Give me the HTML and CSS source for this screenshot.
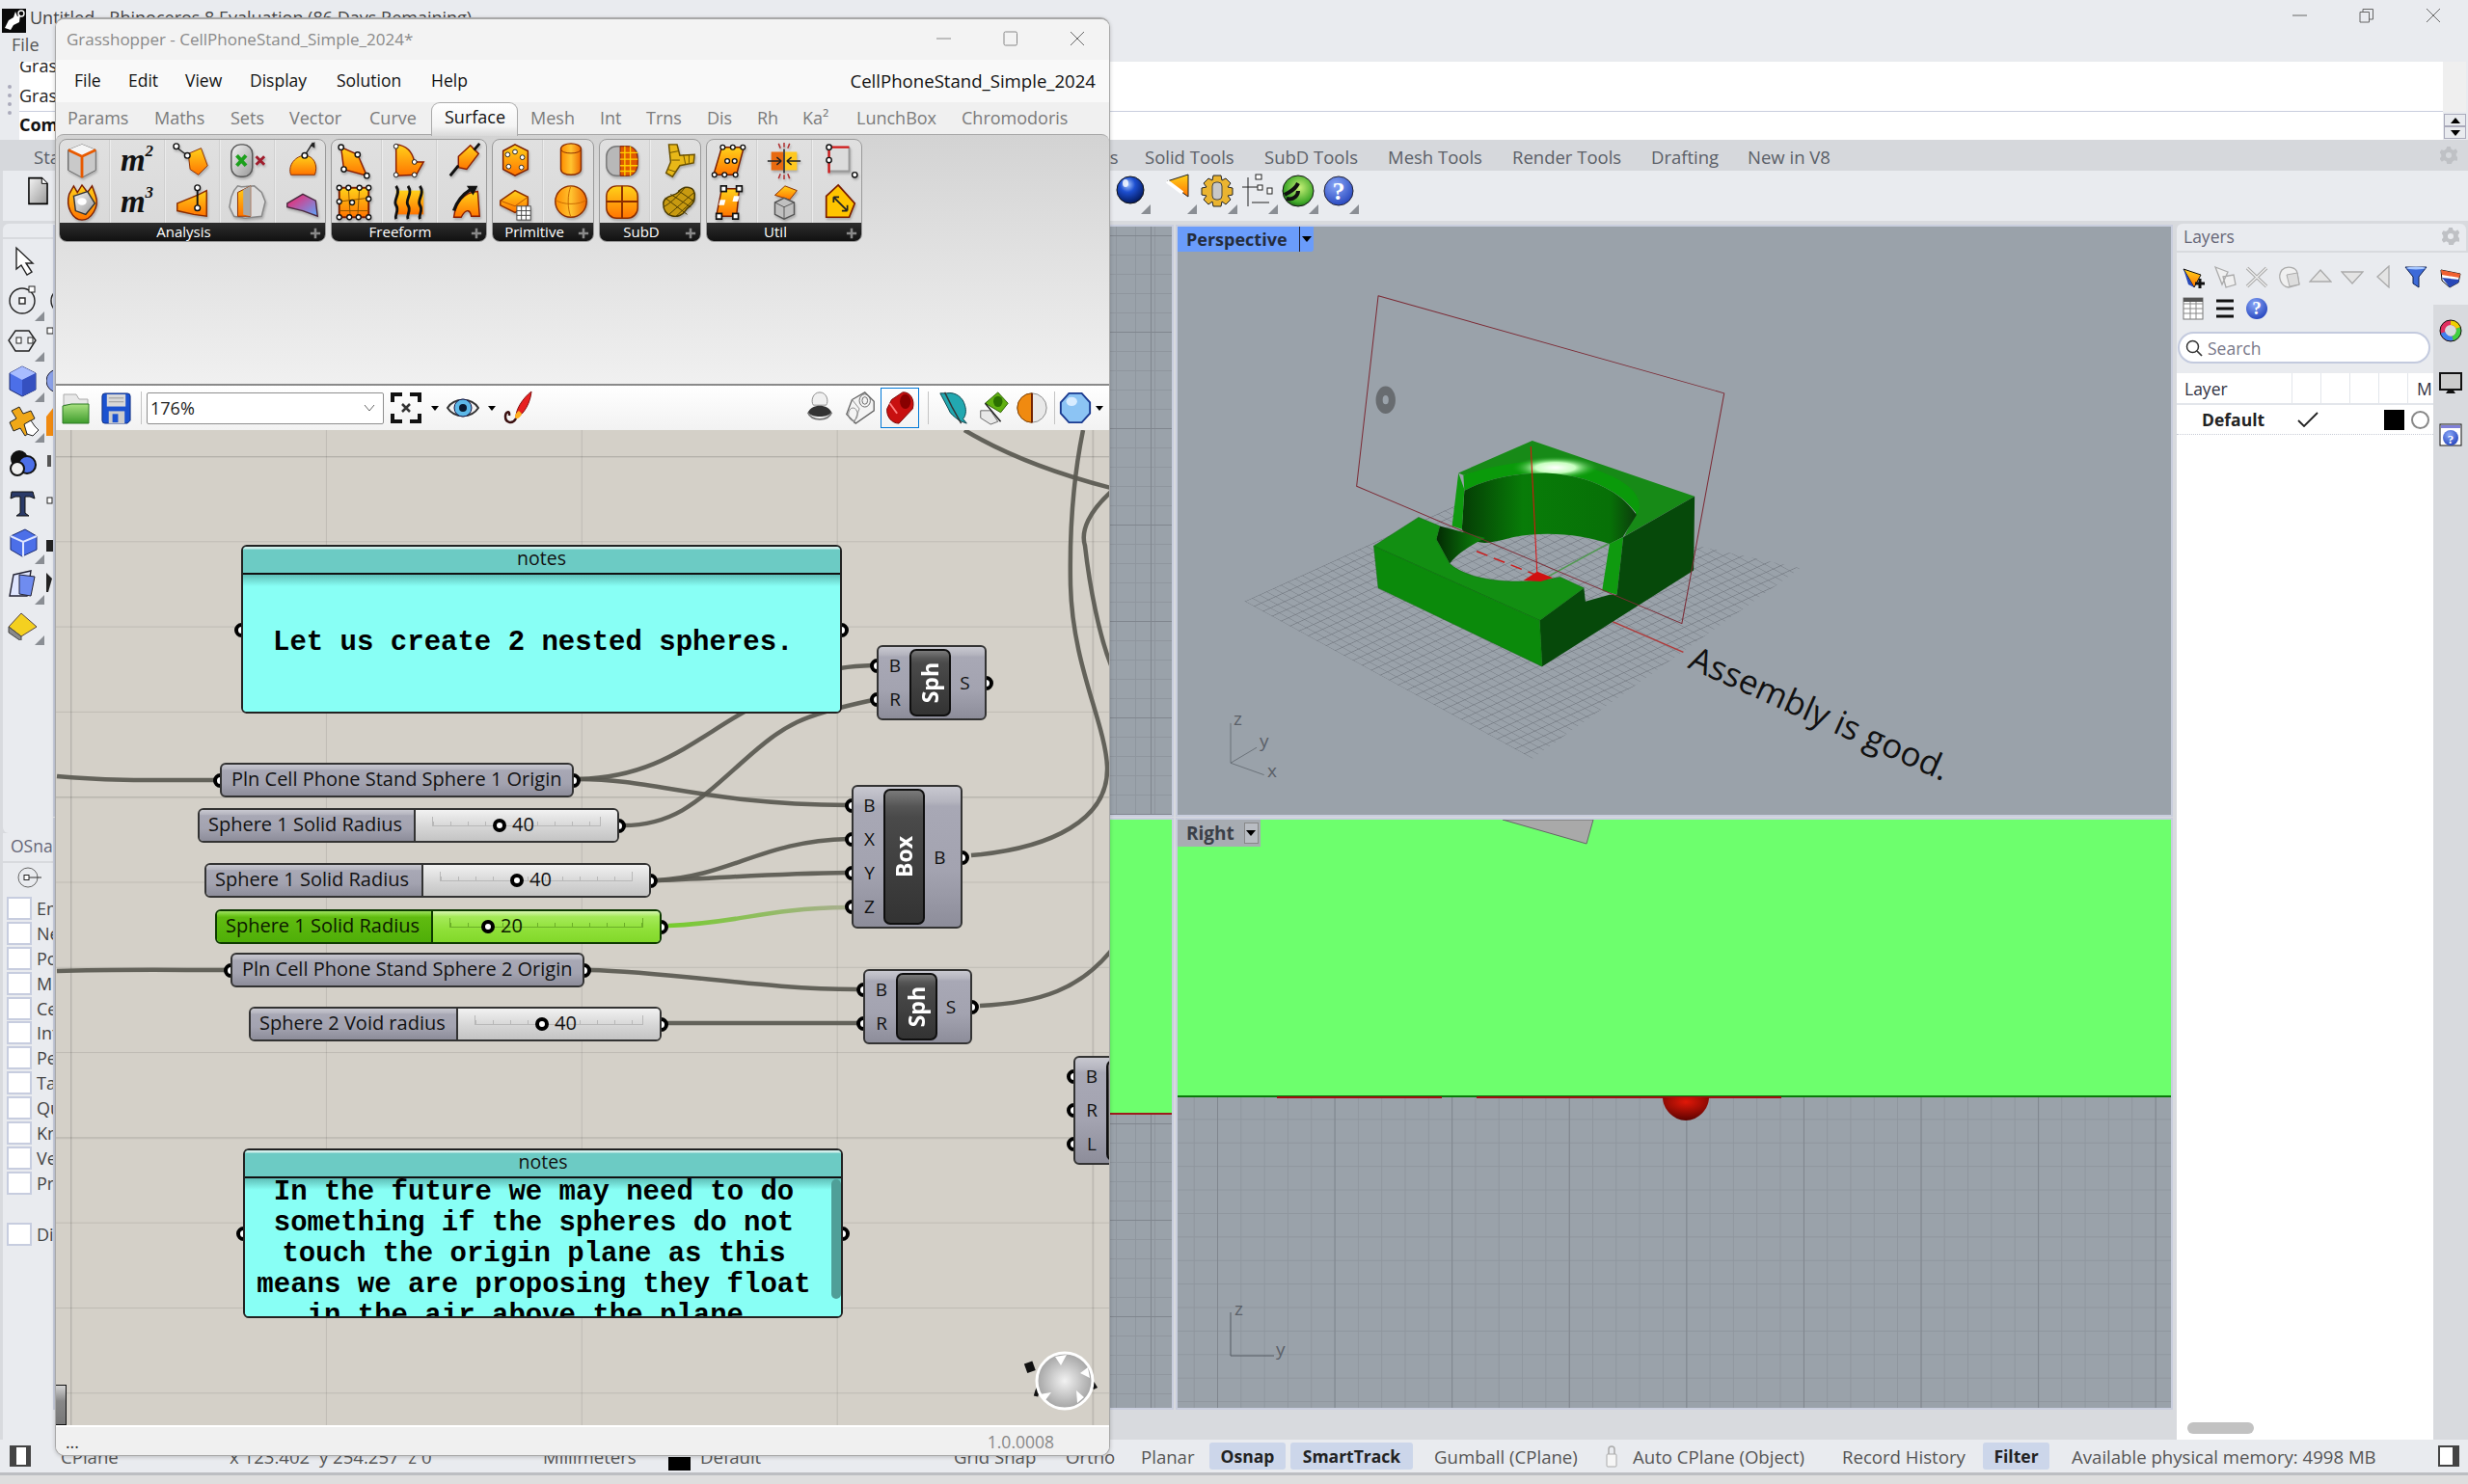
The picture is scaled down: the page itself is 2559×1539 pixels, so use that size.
FILE: index.html
```html
<!DOCTYPE html>
<html lang="en">
<head>
<meta charset="utf-8">
<title>Rhinoceros 8 with Grasshopper</title>
<link rel="stylesheet" href="styles.css">
</head>
<body>
<svg class="defs" aria-hidden="true">
  <defs>
    <linearGradient id="og" x1="0" y1="0" x2="0" y2="1"><stop offset="0" stop-color="#ffd21a"/><stop offset="1" stop-color="#ff7400"/></linearGradient>
    <linearGradient id="oh" x1="0" y1="0" x2="1" y2="0"><stop offset="0" stop-color="#ff8c00"/><stop offset=".5" stop-color="#ffc430"/><stop offset="1" stop-color="#ef6a00"/></linearGradient>
    <linearGradient id="gr" x1="0" y1="0" x2="1" y2="1"><stop offset="0" stop-color="#f4f4f4"/><stop offset="1" stop-color="#999"/></linearGradient>
    <linearGradient id="pk" x1="0" y1="0" x2="1" y2="1"><stop offset="0" stop-color="#ff1a60"/><stop offset="1" stop-color="#5aa8ff"/></linearGradient>
    <radialGradient id="bs" cx=".4" cy=".3" r=".7"><stop offset="0" stop-color="#a8c8ff"/><stop offset=".4" stop-color="#1d4fd0"/><stop offset="1" stop-color="#031a60"/></radialGradient>
    <radialGradient id="hs" cx=".4" cy=".3" r=".8"><stop offset="0" stop-color="#8aa8f8"/><stop offset="1" stop-color="#1c3cb8"/></radialGradient>
    <radialGradient id="gs" cx=".55" cy=".4" r=".7"><stop offset="0" stop-color="#c8f078"/><stop offset=".7" stop-color="#3ea828"/><stop offset="1" stop-color="#0c3a10"/></radialGradient>
    <radialGradient id="nv" cx=".5" cy=".5" r=".55"><stop offset="0" stop-color="#f2f2f2"/><stop offset="1" stop-color="#9c9c9c"/></radialGradient>
    <radialGradient id="rd" cx=".5" cy=".2" r=".8"><stop offset="0" stop-color="#e01808"/><stop offset="1" stop-color="#5c0200"/></radialGradient>
    <radialGradient id="spec" cx=".5" cy=".5" r=".5"><stop offset="0" stop-color="#fff"/><stop offset=".45" stop-color="#c8ffc0"/><stop offset="1" stop-color="#0a9a0a" stop-opacity="0"/></radialGradient>
    <linearGradient id="wall" x1="0" y1="0" x2="1" y2="0"><stop offset="0" stop-color="#053d05"/><stop offset=".35" stop-color="#087c08"/><stop offset=".85" stop-color="#077007"/><stop offset="1" stop-color="#0c3c0c"/></linearGradient>
    <linearGradient id="wall2" x1="0" y1="0" x2="1" y2="0"><stop offset="0" stop-color="#032a03"/><stop offset="1" stop-color="#0c8a0c"/></linearGradient>
    <linearGradient id="gwire" x1="0" y1="0" x2="1" y2="0"><stop offset="0" stop-color="#76cc2e"/><stop offset="1" stop-color="#a9ae90"/></linearGradient>
    <linearGradient id="fold" x1="0" y1="0" x2="0" y2="1"><stop offset="0" stop-color="#a8e080"/><stop offset="1" stop-color="#3e9c2c"/></linearGradient>
    <pattern id="mesh" patternUnits="userSpaceOnUse" width="10" height="10" patternTransform="matrix(1.83 1.11 1.45 -.73 373 1075)">
      <path d="M0 0H10M0 0V10" stroke="#6e747c" stroke-width="1.300" fill="none"/>
    </pattern>
  </defs>
</svg>

<div class="rhino">
  <header class="r-title">
    <svg class="r-logo" viewBox="0 0 25 25"><rect width="25" height="25" fill="#0a0a0a"/><path d="M3 20L7 12 12 9 14 3 16 8 19 6 18 14 12 17 9 22Z" fill="#fff"/><circle cx="20" cy="5" r="3" fill="none" stroke="#fff" stroke-width="1.400"/></svg>
    <span class="r-title-text">Untitled - Rhinoceros 8 Evaluation (86 Days Remaining)</span>
    <div class="win-btns">
      <svg class="wb" viewBox="0 0 16 16"><path d="M0 8H15" stroke="#666" fill="none"/></svg>
      <svg class="wb" viewBox="0 0 16 16"><path d="M1 4.500h9.500v10.500H1zM4 4V1.500h10.500v10.500H11" stroke="#666" fill="none"/></svg>
      <svg class="wb" viewBox="0 0 16 16"><path d="M1 1L15 15M15 1L1 15" stroke="#666" fill="none"/></svg>
    </div>
  </header>
  <div class="r-menu"><span>File</span></div>

  <section class="r-cmd">
    <div class="handle"><i></i><i></i><i></i><i></i></div>
    <div class="cmd-main">
      <div class="cmd-hist"><div>Grasshopper</div><div>Grasshopper</div></div>
      <div class="cmd-prompt">Command:</div>
    </div>
    <div class="cmd-side">
      <div class="cmd-track"></div>
      <div class="cmd-btn"><svg viewBox="0 0 10 6" class="arrow"><path d="M5 0L10 6H0Z"/></svg></div>
      <div class="cmd-btn"><svg viewBox="0 0 10 6" class="arrow"><path d="M0 0H10L5 6Z"/></svg></div>
    </div>
  </section>

  <nav class="r-tabs">
    <span>Standard</span><span>Surface Tools</span><span>Solid Tools</span><span>SubD Tools</span><span>Mesh Tools</span><span>Render Tools</span><span>Drafting</span><span>New in V8</span>
    <svg class="gear r-gear" viewBox="0 0 20 20"><path d="M8 0h4l1 3 2.600 1.100L18 2.600 20.500 6l-2 2.400.3 2.700 2.500 1.800-1.800 3.600-3-.8-2.200 1.700L13 20H8l-.8-3-2.500-1.100L2 17.500-.500 14l2-2.400-.2-2.800L-.500 7 1.600 3.500l3 .9L7 2.800Z" fill="#bfc1c5"/><circle cx="10" cy="10" r="3.400" fill="#d6d8dc"/></svg>
  </nav>

  <div class="r-tools">
    <svg class="doc" viewBox="0 0 22 30"><path d="M1 1H15L21 7V29H1Z" fill="url(#gr)" stroke="#000" stroke-width="1.600"/><path d="M15 1V7H21" fill="#fff" stroke="#000"/></svg>
    <div class="rt-cell rt-first"><svg viewBox="0 0 36 36"><circle cx="18" cy="17" r="14" fill="url(#bs)" stroke="#111"/><ellipse cx="13" cy="10" rx="3" ry="4" fill="#fff" opacity=".8"/></svg><i class="tri"></i></div>
    <div class="rt-cell rt-second"><svg viewBox="0 0 36 36"><path d="M8 8L30 1V24Z" fill="url(#og)" stroke="#222"/><path d="M8 8L24 20" stroke="#fff" stroke-width="4"/></svg><i class="tri"></i></div>
    <div class="rt-cell"><svg viewBox="0 0 36 36"><path d="M14 2h8l1 5 4-2 5 5-3 4 5 1v7l-5 1 3 4-5 5-4-3-1 5h-8l-1-5-4 3-5-5 3-4-5-1v-7l5-1-3-4 5-5 4 2Z" fill="#eab430" stroke="#222"/><rect x="13" y="9" width="10" height="18" rx="4" fill="#c8c8c8" stroke="#444"/></svg><i class="tri"></i></div>
    <div class="rt-cell"><svg viewBox="0 0 36 36"><path d="M2 14H22M8 4V24M8 24V34M12 30H30" stroke="#222" fill="none"/><g fill="#fff" stroke="#222"><rect x="16" y="1" width="6" height="5"/><rect x="18" y="12" width="5" height="5"/><rect x="28" y="15" width="5" height="6"/></g></svg><i class="tri"></i></div>
    <div class="rt-cell"><svg viewBox="0 0 36 36"><circle cx="18" cy="18" r="16" fill="url(#gs)" stroke="#111"/><path d="M4 22C10 18 14 18 18 10M6 26C14 28 18 22 18 18" stroke="#111" stroke-width="4" fill="none"/></svg><i class="tri"></i></div>
    <div class="rt-cell"><svg viewBox="0 0 36 36"><circle cx="18" cy="18" r="15" fill="url(#hs)" stroke="#223"/><text class="qm" x="18" y="27">?</text></svg><i class="tri"></i></div>
  </div>

  <div class="r-main">
    <aside class="left">
      <div class="toolbox">
        <div class="tb-strip"></div>
        <div class="tb-grid">
          <div class="tool"><svg viewBox="0 0 32 34"><path d="M9 5V27L14 23 20 33 25 30 19 21H26Z" fill="#fff" stroke="#222" stroke-width="1.400"/></svg></div>
          <div class="tool"></div>
          <div class="tool"><svg viewBox="0 0 32 34"><circle cx="15" cy="18" r="13" fill="none" stroke="#222" stroke-width="1.400"/><rect x="12" y="15" width="6" height="6" fill="#fff" stroke="#222" stroke-width="1.400"/><rect x="22" y="3" width="6" height="6" fill="#fff" stroke="#222"/></svg><i class="tri"></i></div>
          <div class="tool"><svg viewBox="0 0 32 34"><circle cx="18" cy="18" r="13" fill="none" stroke="#222" stroke-width="1.400"/></svg></div>
          <div class="tool"><svg viewBox="0 0 32 34"><path d="M8 7H22L29 17 22 28H8L1 17Z" fill="none" stroke="#222" stroke-width="1.400"/><rect x="9" y="14" width="5" height="6" fill="#fff" stroke="#222"/><rect x="21" y="14" width="5" height="6" fill="#fff" stroke="#222"/></svg><i class="tri"></i></div>
          <div class="tool"><svg viewBox="0 0 32 34"><rect x="1" y="4" width="6" height="6" fill="#fff" stroke="#222"/></svg></div>
          <div class="tool"><svg viewBox="0 0 32 34"><path d="M15 2L29 9V26L15 33 2 26V9Z" fill="#4c6fe8" stroke="#1a2a70"/><path d="M2 9L15 16 29 9 15 2Z" fill="#a8bcff"/><path d="M15 16V33L29 26V9Z" fill="#3550c0"/></svg><i class="tri"></i></div>
          <div class="tool"><svg viewBox="0 0 32 34"><circle cx="12" cy="17" r="12" fill="#8aa0e8" stroke="#223"/></svg></div>
          <div class="tool"><svg viewBox="0 0 32 34"><path d="M4 6L12 2 16 9 24 6 28 14 21 18 26 26 18 32 13 24 6 27 2 18 9 14Z" fill="#f0a818" stroke="#222"/><path d="M17 20L24 16 28 22 32 26 26 32 20 30Z" fill="#fff" stroke="#222"/></svg><i class="tri"></i></div>
          <div class="tool"><svg viewBox="0 0 32 34"><path d="M0 32V12L8 2V32Z" fill="#f08a10"/></svg></div>
          <div class="tool"><svg viewBox="0 0 32 34"><circle cx="12" cy="14" r="9" fill="#111"/><circle cx="20" cy="20" r="9" fill="#4c6fe8" stroke="#111" stroke-width="2"/><circle cx="10" cy="24" r="7" fill="#eee" stroke="#111" stroke-width="2"/></svg></div>
          <div class="tool"><svg viewBox="0 0 32 34"><rect x="1" y="10" width="4" height="12" fill="#555"/></svg></div>
          <div class="tool"><svg viewBox="0 0 32 34"><path d="M4 6H26L28 13 23 11H18V28L22 31H9L13 28V11H8L3 13Z" fill="#2a3a68" stroke="#111"/></svg></div>
          <div class="tool"><svg viewBox="0 0 32 34"><rect x="1" y="12" width="5" height="6" fill="#fff" stroke="#222"/></svg></div>
          <div class="tool"><svg viewBox="0 0 32 34"><path d="M3 10L18 3 30 10V24L15 31 3 24Z" fill="#4c6fe8" stroke="#1a2a70"/><path d="M3 10L16 16 30 10M16 16V31" stroke="#dfe6ff" stroke-width="2" fill="none"/></svg><i class="tri"></i></div>
          <div class="tool"><svg viewBox="0 0 32 34"><path d="M0 14H8V26H0Z" fill="#222"/></svg></div>
          <div class="tool"><svg viewBox="0 0 32 34"><path d="M6 8L24 4 20 30 2 30Z" fill="#dfe6ff" stroke="#223" stroke-width="1.400"/><path d="M12 8L28 10 24 30 12 28Z" fill="#6f8cf0" stroke="#223"/></svg><i class="tri"></i></div>
          <div class="tool"><svg viewBox="0 0 32 34"><path d="M0 6L6 12 2 26H0Z" fill="#222"/></svg></div>
          <div class="tool"><svg viewBox="0 0 32 34"><path d="M14 6L30 20 14 30 1 20Z" fill="#f4d020" stroke="#544"/><path d="M1 20L14 30V35L1 26Z" fill="#8a8a8a" stroke="#444"/></svg><i class="tri"></i></div>
          <div class="tool"></div>
        </div>
      </div>
      <div class="osnap">
        <div class="os-head">OSnap</div>
        <div class="os-ic"><svg viewBox="0 0 26 24"><circle cx="11" cy="12" r="10" fill="none" stroke="#666"/><rect x="7" y="9.500" width="5" height="5" fill="#fff" stroke="#222"/><path d="M12 12H25" stroke="#333"/></svg></div>
        <ul class="os-list">
          <li>End</li><li>Near</li><li>Point</li><li>Mid</li><li>Cen</li><li>Int</li><li>Perp</li><li>Tan</li><li>Quad</li><li>Knot</li><li>Vertex</li><li>Project</li>
          <li class="os-dis">Disable</li>
        </ul>
      </div>
    </aside>

    <main class="vps">
      <div class="vp vp-gridded">
        <svg class="vp-svg" viewBox="1151 235 64 610" preserveAspectRatio="xMaxYMin slice"><path d="M1151 367H1215M1151 540H1215M1151 765H1215M1151 812H1215" stroke="#8a3a40" stroke-width="1.500"/></svg>
      </div>
      <div class="vp vp-persp">
        <svg class="vp-svg" viewBox="1221 235 1030 610">
          <g transform="translate(1100,130) scale(.5102,.4592)">
            <polygon points="373,1075 838,840 1503,1000 958,1430" fill="url(#mesh)"/>
            <path d="M1120 1120L1265 1190" stroke="#b03a3a" stroke-width="3"/>
            <path d="M985 1022L1112 945" stroke="#4f9a4f" stroke-width="3"/>
            <path d="M845 962L965 1015" stroke="#cc1a1a" stroke-width="3" stroke-dasharray="24 14"/>
            <polygon points="808,785 958,712 1288,838 1145,928 1175,860 1100,795 1000,760 900,770 818,790" fill="#178a17"/>
            <path d="M818 790C900 760 1000 745 1080 775 1150 800 1175 830 1176 860L1172 880C1140 830 1080 790 985 785 920 785 860 800 820 825Z" fill="#0a9a0a"/>
            <ellipse cx="1005" cy="773" rx="90" ry="26" fill="url(#spec)"/>
            <path d="M820 825C860 800 920 785 985 785 1080 790 1140 830 1170 880L1142 930 1115 945C1060 925 990 915 920 930 880 940 840 960 815 912Z" fill="url(#wall)"/>
            <polygon points="808,785 820,822 815,912 795,905" fill="#0f9a0f"/>
            <polygon points="1115,945 1143,930 1130,1060 1100,1050" fill="#0f9a0f"/>
            <path d="M763 935L770 905 862 932C830 950 805 968 790 990Z" fill="url(#wall2)"/>
            <polygon points="1288,838 1286,1005 978,1222 973,1118 1063,1045 1066,1075 1115,1060 1130,1060 1143,930" fill="#06490a"/>
            <path d="M636 950L727 885 770 905 763 935 790 990C830 1030 930 1040 1015 1020L1063 1045 973 1118Z" fill="#128f12" stroke="#0a6a0a"/>
            <polygon points="636,950 973,1118 978,1222 645,1045" fill="#0b8a0b" stroke="#0a6a0a"/>
            <polygon points="940,1028 968,1008 1000,1022 975,1030" fill="#d01010"/>
            <path d="M955 725L968 1015" stroke="#e01010" stroke-width="2"/>
            <polygon points="645,385 1348,605 1262,1125 601,815" fill="none" stroke="#7c2a34" stroke-width="2" stroke-linejoin="round"/>
            <ellipse cx="660" cy="620" rx="20" ry="31" fill="#686c70"/><ellipse cx="660" cy="620" rx="6" ry="10" fill="#9aa2aa"/>
            <path d="M345 1350V1440L398 1405M345 1440L413 1467" stroke="#5a6068" stroke-width="1.500" fill="none"/>
          </g>
          <text class="ax" x="1279" y="752">z</text><text class="ax" x="1306" y="775">y</text><text class="ax" x="1314" y="806">x</text>
          <text class="assembly" transform="translate(1749,692) rotate(24)">Assembly is good.</text>
        </svg>
        <div class="vp-tab vp-tab-blue"><span>Perspective</span><i class="vp-drop"><svg viewBox="0 0 10 6" class="arrow2"><path d="M0 0H10L5 6Z"/></svg></i></div>
      </div>
      <div class="vp">
        <div class="vp-green g-left"></div>
        <div class="vp-gridded vp-rest"></div>
      </div>
      <div class="vp">
        <div class="vp-green g-right"></div>
        <div class="vp-gridded vp-rest vp-rest-right"></div>
        <svg class="vp-svg" viewBox="1221 850 1030 610">
          <polygon points="1558,850 1652,850 1645,875" fill="#a9a9a9" stroke="#666"/>
          <path d="M1221 1137H2251" stroke="#0a7a0a" stroke-width="2"/>
          <path d="M1324 1138H1495M1531 1138H1847" stroke="#a01010" stroke-width="2"/>
          <path d="M1724 1138C1724 1150 1735 1162 1748 1162 1761 1162 1772 1150 1772 1138Z" fill="url(#rd)"/>
          <path d="M1276 1361V1406H1321" stroke="#555b63" fill="none"/>
          <text class="ax" x="1280" y="1364">z</text><text class="ax" x="1323" y="1406">y</text>
        </svg>
        <div class="vp-tab vp-tab-gray"><span>Right</span><i class="vp-drop2"><svg viewBox="0 0 10 6" class="arrow2"><path d="M0 0H10L5 6Z"/></svg></i></div>
      </div>
    </main>

    <aside class="layers">
      <div class="ly-head"><span>Layers</span><svg class="gear" viewBox="0 0 20 20"><path d="M8 0h4l1 3 2.600 1.100L18 2.600 20.500 6l-2 2.400.3 2.700 2.500 1.800-1.800 3.600-3-.8-2.200 1.700L13 20H8l-.8-3-2.500-1.100L2 17.500-.500 14l2-2.400-.2-2.800L-.500 7 1.600 3.500l3 .9L7 2.800Z" fill="#bfc1c5"/><circle cx="10" cy="10" r="3.400" fill="#e9ebef"/></svg></div>
      <div class="ly-body">
        <div class="ly-left">
          <div class="ly-tools">
            <svg viewBox="0 0 24 24"><path d="M2 4L20 10 13 23Z" fill="url(#og)" stroke="#111"/><path d="M2 4L13 23 7 20Z" fill="#2848b8"/><path d="M14 19H24M19 14V24" stroke="#111" stroke-width="3"/></svg>
            <svg viewBox="0 0 24 24"><path d="M2 2L15 7 9 20ZM10 12L21 10 23 20 13 23Z" fill="#f0f0f0" stroke="#aaa" stroke-width="1.300"/></svg>
            <svg viewBox="0 0 24 24"><path d="M2 3L22 22M22 3L2 22" stroke="#aaa" stroke-width="3.500" fill="none"/><path d="M2 3L22 22M22 3L2 22" stroke="#eee" stroke-width="1.400" fill="none"/></svg>
            <svg viewBox="0 0 24 24"><path d="M5 5C10 0 20 2 21 8L23 20 12 23C4 22 0 12 5 5Z" fill="#f0f0f0" stroke="#aaa" stroke-width="1.300"/><path d="M10 10L21 8 23 20 13 22Z" fill="#ddd" stroke="#aaa"/></svg>
            <svg viewBox="0 0 24 24"><path d="M12 5L23 17H1Z" fill="#e4e4e4" stroke="#aaa" stroke-width="1.300"/></svg>
            <svg viewBox="0 0 24 24"><path d="M12 19L23 7H1Z" fill="#e4e4e4" stroke="#aaa" stroke-width="1.300"/></svg>
            <svg viewBox="0 0 24 24"><path d="M5 12L17 1V23Z" fill="#e4e4e4" stroke="#aaa" stroke-width="1.300"/></svg>
            <svg viewBox="0 0 24 24"><path d="M1 2H23L15 12V23L9 19V12Z" fill="#3c6ad8" stroke="#102050"/><ellipse cx="12" cy="3" rx="10" ry="1.500" fill="#a8c8ff"/></svg>
            <svg viewBox="0 0 24 24"><rect x="2" y="1" width="20" height="22" fill="#fff" stroke="#777"/><path d="M2 7H22M2 12H22M2 17H22M9 1V23M15 1V23" stroke="#888"/><rect x="2" y="1" width="20" height="4" fill="#555"/></svg>
            <svg viewBox="0 0 24 24"><path d="M3 4H21M3 12H21M3 20H21" stroke="#111" stroke-width="3.200"/></svg>
            <svg viewBox="0 0 24 24"><circle cx="12" cy="12" r="11" fill="url(#hs)"/><text class="qm qm-s" x="12" y="18">?</text></svg>
          </div>
          <div class="ly-search"><svg viewBox="0 0 18 18"><circle cx="7.500" cy="7.500" r="6" fill="none" stroke="#333" stroke-width="1.500"/><path d="M12 12L17 17" stroke="#333" stroke-width="1.700"/></svg><span>Search</span></div>
          <div class="ly-table">
            <div class="ly-th"><span class="th-name">Layer</span><i></i><i></i><i></i><i></i><span class="th-m">M</span></div>
            <div class="ly-row"><span class="row-name">Default</span><svg class="row-check" viewBox="0 0 22 16"><path d="M1 9L7 15 21 1" fill="none" stroke="#222" stroke-width="1.800"/></svg><i class="row-col"></i><i class="row-mat"></i></div>
            <div class="ly-thumb"></div>
          </div>
        </div>
        <div class="ly-side">
          <svg viewBox="0 0 24 24"><path d="M2 5L22 9 20 18 11 23 3 16Z" fill="#fff" stroke="#111"/><path d="M2 5L22 9 21 13 3 10Z" fill="#f06030"/><path d="M3 13L21 15 20 18 11 23Z" fill="#2848b8"/></svg>
          <svg class="ly-side-first" viewBox="0 0 24 24"><circle cx="12" cy="12" r="8.500" fill="none" stroke="#e03060" stroke-width="5"/><path d="M12 3.500A8.500 8.500 0 0 1 20 9" stroke="#f0d000" stroke-width="5" fill="none"/><path d="M20 9A8.500 8.500 0 0 1 14 20" stroke="#40d040" stroke-width="5" fill="none"/><path d="M14 20A8.500 8.500 0 0 1 4 14" stroke="#4080f0" stroke-width="5" fill="none"/><circle cx="12" cy="12" r="11" fill="none" stroke="#111"/></svg>
          <svg viewBox="0 0 24 24"><rect x="1" y="2" width="22" height="17" fill="#ccc" stroke="#111" stroke-width="2"/><path d="M9 20H15L17 23H7Z" fill="#111"/></svg>
          <svg viewBox="0 0 24 24"><rect x="1" y="1" width="22" height="22" fill="#fff" stroke="#111"/><rect x="2" y="2" width="20" height="3" fill="#8080d8"/><circle cx="12" cy="15" r="8" fill="url(#hs)"/><text class="qm qm-xs" x="12" y="21">?</text></svg>
        </div>
      </div>
    </aside>
  </div>

  <footer class="r-status">
    <svg class="panel-ic" viewBox="0 0 22 22"><rect x="1" y="1" width="20" height="20" fill="#fff" stroke="#444" stroke-width="2"/><rect x="1" y="1" width="6" height="20" fill="#444"/><rect x="17" y="1" width="4" height="20" fill="#444"/></svg>
    <span>CPlane</span><span>x 123.402&nbsp;&nbsp;y 254.257&nbsp;&nbsp;z 0</span><span>Millimeters</span><i class="st-swatch"></i><span>Default</span><span>Grid Snap</span><span>Ortho</span><span>Planar</span>
    <b class="pill p-osnap">Osnap</b><b class="pill p-smart">SmartTrack</b><span>Gumball (CPlane)</span>
    <svg class="lock" viewBox="0 0 14 24"><path d="M4 10V5C4 1 10 1 10 5V10" fill="none" stroke="#aaa" stroke-width="1.500"/><rect x="2" y="10" width="10" height="13" rx="1" fill="#f6f6f6" stroke="#aaa"/></svg>
    <span>Auto CPlane (Object)</span><span>Record History</span><b class="pill p-filter">Filter</b><span>Available physical memory: 4998 MB</span>
    <svg class="panel-ic" viewBox="0 0 22 22"><rect x="1" y="1" width="20" height="20" fill="#fff" stroke="#444" stroke-width="2"/><rect x="15" y="1" width="6" height="20" fill="#444"/></svg>
  </footer>
  <div class="r-bottom"></div>

  <section class="gh">
    <div class="gh-title">
      <span>Grasshopper - CellPhoneStand_Simple_2024*</span>
      <div class="gh-btns">
        <svg class="wb" viewBox="0 0 16 16"><path d="M0 8H15" stroke="#888" fill="none"/></svg>
        <svg class="wb" viewBox="0 0 16 16"><rect x="1" y="1" width="13.500" height="14" rx="1.500" stroke="#888" fill="none"/></svg>
        <svg class="wb" viewBox="0 0 16 16"><path d="M1 1L15 15M15 1L1 15" stroke="#666" fill="none"/></svg>
      </div>
    </div>
    <div class="gh-menu"><span>File</span><span>Edit</span><span>View</span><span>Display</span><span>Solution</span><span>Help</span><span class="gh-doc">CellPhoneStand_Simple_2024</span></div>
    <div class="gh-tabs"><span>Params</span><span>Maths</span><span>Sets</span><span>Vector</span><span>Curve</span><span class="active">Surface</span><span>Mesh</span><span>Int</span><span>Trns</span><span>Dis</span><span>Rh</span><span>Ka²</span><span>LunchBox</span><span>Chromodoris</span></div>

    <div class="ribbon">
      <div class="rg rg5">
        <div class="rg-icons">
          <div class="ic"><svg viewBox="0 0 44 42"><path d="M22 3L37 9V31L22 39 7 31V9Z" fill="#c9c9c9" stroke="#666"/><path d="M22 3L37 9 22 16 7 9Z" fill="#f6f6f6"/><path d="M7 9L22 16 37 9M22 16V39" fill="none" stroke="#e85a00" stroke-width="3"/><path d="M7 9V31" stroke="#666"/></svg></div>
          <div class="ic ic-text"><span class="mm">m<sup>2</sup></span></div>
          <div class="ic"><svg viewBox="0 0 44 42"><path d="M5 6L17 15" stroke="#222" stroke-width="1.500"/><path d="M18 13L32 7 39 26 29 36 20 30Z" fill="url(#og)" stroke="#8a2c00"/><circle cx="5" cy="5" r="3" fill="#fff" stroke="#111" stroke-width="1.500"/><circle cx="17" cy="15" r="3" fill="#fff" stroke="#111" stroke-width="1.500"/></svg></div>
          <div class="ic"><svg viewBox="0 0 44 42"><rect x="5" y="3" width="23" height="35" rx="10" fill="url(#gr)" stroke="#555" stroke-width="1.500"/><path d="M11 15L21 26M21 15L11 26" stroke="#1ca01c" stroke-width="4"/><path d="M32 16L41 25M41 16L32 25" stroke="#a01c2c" stroke-width="3"/></svg></div>
          <div class="ic"><svg viewBox="0 0 44 42"><path d="M9 36C5 25 15 15 24 15 34 15 39 26 35 36Z" fill="url(#og)" stroke="#8a2c00"/><path d="M24 15L33 1" stroke="#222" stroke-width="1.500"/><path d="M30 4L35 0 35 7Z" fill="#222"/><circle cx="24" cy="15" r="3" fill="#fff" stroke="#111" stroke-width="1.500"/></svg></div>
          <div class="ic"><svg viewBox="0 0 44 42"><path d="M8 12L13 3 17 10 22 2 28 10 33 3 37 14C41 26 32 40 22 40 12 40 4 26 8 12Z" fill="url(#og)" stroke="#7a1c00" stroke-width="1.500"/><path d="M13 14L28 9 36 22 26 34 15 30Z" fill="url(#gr)" stroke="#333" stroke-width="1.500"/><ellipse cx="22" cy="20" rx="5" ry="4" fill="#fff"/></svg></div>
          <div class="ic ic-text"><span class="mm">m<sup>3</sup></span></div>
          <div class="ic"><svg viewBox="0 0 44 42"><path d="M6 22L28 13 38 8V36L24 34 6 30Z" fill="url(#og)" stroke="#8a2c00" stroke-width="1.500"/><path d="M28 6V26" stroke="#111" stroke-width="2"/><circle cx="28" cy="5" r="3" fill="#fff" stroke="#111" stroke-width="1.500"/><circle cx="28" cy="27" r="3" fill="#fff" stroke="#111" stroke-width="1.500"/></svg></div>
          <div class="ic"><svg viewBox="0 0 44 42"><path d="M5 15L8 8 12 3 16 4 30 3 38 10 42 20 38 36 20 38 8 36 3 26Z" fill="#ddd" stroke="#888" stroke-width="1.500"/><path d="M12 10L26 3V36L12 36Z" fill="url(#og)" stroke="#8a2c00"/><path d="M18 7L26 3V36L18 34Z" fill="#a8a8a8"/></svg></div>
          <div class="ic"><svg viewBox="0 0 44 42"><path d="M5 22L22 12 36 19 38 36 22 30 5 26Z" fill="url(#pk)" stroke="#4a2a40" stroke-width="1.500"/></svg></div>
        </div>
        <div class="rg-bar"><span>Analysis</span><svg class="plus" viewBox="0 0 14 14"><path d="M7 1V13M1 7H13" stroke="#888" stroke-width="3"/></svg></div>
      </div>
      <div class="rg rg3">
        <div class="rg-icons">
          <div class="ic"><svg viewBox="0 0 44 42"><path d="M8 6L26 14 36 37 11 30Z" fill="url(#og)" stroke="#8a1c00" stroke-width="1.500"/><g fill="#fff" stroke="#111" stroke-width="1.500"><circle cx="8" cy="6" r="2.800"/><circle cx="26" cy="14" r="2.800"/><circle cx="36" cy="37" r="2.800"/><circle cx="11" cy="30" r="2.800"/></g></svg></div>
          <div class="ic"><svg viewBox="0 0 44 42"><path d="M8 3C20 4 26 12 28 22L38 22 30 36 8 37Z" fill="url(#og)" stroke="#8a1c00" stroke-width="1.500"/><g fill="#fff" stroke="#111"><circle cx="8" cy="5" r="2.500"/><circle cx="28" cy="22" r="2.500"/><circle cx="28" cy="36" r="2.500"/><circle cx="8" cy="36" r="2.500"/></g></svg></div>
          <div class="ic"><svg viewBox="0 0 44 42"><path d="M15 16L28 4 37 13 24 30 15 28Z" fill="url(#og)" stroke="#8a1c00" stroke-width="1.500"/><path d="M6 37L15 26M32 9L38 2" stroke="#111" stroke-width="3"/></svg></div>
          <div class="ic"><svg viewBox="0 0 44 42"><rect x="6" y="5" width="32" height="32" fill="url(#og)" stroke="#7a1c00" stroke-width="2"/><path d="M6 20L38 16M6 30H38M16 5L18 37M28 5L26 37" stroke="#8a5000"/><g fill="#fff" stroke="#111" stroke-width="1.400"><circle cx="6" cy="5" r="2.600"/><circle cx="16" cy="5" r="2.600"/><circle cx="28" cy="5" r="2.600"/><circle cx="38" cy="5" r="2.600"/><circle cx="6" cy="20" r="2.600"/><circle cx="38" cy="17" r="2.600"/><circle cx="6" cy="37" r="2.600"/><circle cx="17" cy="37" r="2.600"/><circle cx="27" cy="37" r="2.600"/><circle cx="38" cy="37" r="2.600"/><circle cx="20" cy="21" r="2.600"/></g></svg></div>
          <div class="ic"><svg viewBox="0 0 44 42"><path d="M8 8H38V34H8Z" fill="url(#og)"/><path d="M8 3C14 12 4 18 8 24 12 30 6 34 8 39M21 3C27 12 17 18 21 24 25 30 19 34 21 39M34 3C40 12 30 18 34 24 38 30 32 34 34 39" fill="none" stroke="#111" stroke-width="3"/></svg></div>
          <div class="ic"><svg viewBox="0 0 44 42"><path d="M10 37C12 22 20 10 36 9L38 36H29C28 30 24 26 18 37Z" fill="url(#og)" stroke="#8a1c00" stroke-width="1.500"/><path d="M10 30C14 18 20 12 28 7" stroke="#111" stroke-width="3.500" fill="none"/><path d="M24 3L36 3 31 13Z" fill="#111"/></svg></div>
        </div>
        <div class="rg-bar"><span>Freeform</span><svg class="plus" viewBox="0 0 14 14"><path d="M7 1V13M1 7H13" stroke="#888" stroke-width="3"/></svg></div>
      </div>
      <div class="rg rg2">
        <div class="rg-icons">
          <div class="ic"><svg viewBox="0 0 44 42"><path d="M22 3L36 10V30L22 37 9 30V10Z" fill="url(#og)" stroke="#7a1c00" stroke-width="1.500"/><g fill="#fff" stroke="#222"><circle cx="22" cy="11" r="2.500"/><circle cx="14" cy="14" r="2.500"/><circle cx="30" cy="17" r="2.500"/><circle cx="15" cy="27" r="2.500"/><circle cx="29" cy="28" r="2.500"/></g></svg></div>
          <div class="ic"><svg viewBox="0 0 44 42"><path d="M11 8C11 0 33 0 33 8V30C33 38 11 38 11 30Z" fill="url(#oh)" stroke="#8a2c00" stroke-width="1.500"/><path d="M11 8C11 14 33 14 33 8" fill="none" stroke="#8a2c00"/></svg></div>
          <div class="ic"><svg viewBox="0 0 44 42"><path d="M6 19L22 8 36 15V24L22 32 6 24Z" fill="url(#og)" stroke="#8a2c00" stroke-width="1.500"/><path d="M6 19L22 25 36 15" fill="none" stroke="#b85000"/><rect x="24" y="25" width="15" height="15" fill="#fff" stroke="#444"/><path d="M24 30H39M24 35H39M29 25V40M34 25V40" stroke="#444"/></svg></div>
          <div class="ic"><svg viewBox="0 0 44 42"><circle cx="22" cy="20" r="17" fill="url(#oh)" stroke="#8a2c00" stroke-width="1.500"/><path d="M5 18C12 24 32 24 39 18M22 3C18 12 18 28 22 37" fill="none" stroke="#c86800"/></svg></div>
        </div>
        <div class="rg-bar"><span>Primitive</span><svg class="plus" viewBox="0 0 14 14"><path d="M7 1V13M1 7H13" stroke="#888" stroke-width="3"/></svg></div>
      </div>
      <div class="rg rg2">
        <div class="rg-icons">
          <div class="ic"><svg viewBox="0 0 44 42"><rect x="5" y="5" width="34" height="32" rx="11" fill="#b8b8b8" stroke="#777" stroke-width="1.500"/><path d="M20 5H28C36 5 39 12 39 21 39 30 36 37 28 37H20Z" fill="#e05a00" stroke="#8a1c00"/><path d="M20 12H39M20 19H39M20 26H39M20 32H36M25 5V37M31 5V37" stroke="#ffd000" stroke-width="1.400"/></svg></div>
          <div class="ic"><svg viewBox="0 0 44 42"><path d="M12 3H21L24 15 40 14 39 23 24 26 16 38 9 34 14 22Z" fill="#e8b818" stroke="#6a5000" stroke-width="1.500"/><path d="M13 12L23 10M15 20H24M28 14L30 24M34 14V23M11 30L20 33" stroke="#6a5000"/></svg></div>
          <div class="ic"><svg viewBox="0 0 44 42"><rect x="5" y="3" width="34" height="35" rx="11" fill="url(#og)" stroke="#8a2c00" stroke-width="1.500"/><path d="M22 3V38M5 20H39" stroke="#8a2c00" stroke-width="2"/></svg></div>
          <div class="ic"><svg viewBox="0 0 44 42"><path d="M6 22C6 14 18 14 22 10 28 2 42 2 40 16 40 24 34 24 30 30 24 40 6 38 6 22Z" fill="#c89a10" stroke="#4a3a00" stroke-width="1.500"/><path d="M8 16L32 34M14 12L36 26M22 8L40 20M6 26C14 22 26 10 30 4M12 34C22 26 34 14 40 10M20 36C26 30 36 22 40 16" stroke="#4a3a00" fill="none"/></svg></div>
        </div>
        <div class="rg-bar"><span>SubD</span><svg class="plus" viewBox="0 0 14 14"><path d="M7 1V13M1 7H13" stroke="#888" stroke-width="3"/></svg></div>
      </div>
      <div class="rg rg3">
        <div class="rg-icons">
          <div class="ic"><svg viewBox="0 0 44 42"><path d="M14 6H38L30 36H5Z" fill="url(#og)" stroke="#7a1c00" stroke-width="1.500"/><g fill="#fff" stroke="#111" stroke-width="1.400"><circle cx="15" cy="6" r="2.500"/><circle cx="26" cy="6" r="2.500"/><circle cx="37" cy="6" r="2.500"/><circle cx="20" cy="21" r="2.500"/><circle cx="28" cy="21" r="2.500"/><circle cx="6" cy="36" r="2.500"/><circle cx="17" cy="36" r="2.500"/><circle cx="29" cy="36" r="2.500"/></g></svg></div>
          <div class="ic"><svg viewBox="0 0 44 42"><rect x="8" y="11" width="13" height="20" fill="#e86a10"/><rect x="23" y="11" width="13" height="20" fill="#ffc820"/><path d="M4 21H19M19 21L14 17M19 21L14 25M40 21H25M25 21L30 17M25 21L30 25M22 8V34" stroke="#222" stroke-width="1.600" fill="none"/><path d="M16 2L18 7M22 1V6M28 2L26 7M16 40L18 35M22 41V36M28 40L26 35" stroke="#b03030" stroke-width="1.600"/></svg></div>
          <div class="ic"><svg viewBox="0 0 44 42"><path d="M10 6V32H32V6" fill="#dcdcdc" stroke="#999" stroke-width="2"/><path d="M10 34V6H32" fill="none" stroke="#d01818" stroke-width="2.400"/><g fill="#fff" stroke="#111" stroke-width="1.500"><circle cx="10" cy="6" r="2.800"/><circle cx="10" cy="20" r="2.800"/><circle cx="38" cy="36" r="2.800"/></g></svg></div>
          <div class="ic"><svg viewBox="0 0 44 42"><path d="M14 6H33L30 36H8Z" fill="url(#og)" stroke="#7a1c00" stroke-width="1.500"/><g fill="#fff" stroke="#111" stroke-width="1.800"><rect x="13" y="3" width="6" height="6"/><rect x="30" y="3" width="6" height="6"/><rect x="8" y="33" width="6" height="6"/><rect x="26" y="33" width="6" height="6"/></g><g fill="#fff"><rect x="17" y="18" width="6" height="6" transform="skewX(-15)"/><rect x="31" y="14" width="6" height="6" transform="skewX(-15)"/></g></svg></div>
          <div class="ic"><svg viewBox="0 0 44 42"><path d="M12 13L23 3 36 8 28 18Z" fill="url(#og)" stroke="#8a2c00"/><path d="M12 21L22 16 33 21V34L22 39 12 34Z" fill="#c0c0c0" stroke="#555" stroke-width="1.500"/><path d="M12 21L22 26 33 21M22 26V39" fill="none" stroke="#555"/></svg></div>
          <div class="ic"><svg viewBox="0 0 44 42"><path d="M20 2L38 22 32 37H7V14Z" fill="#ffc400" stroke="#7a1c00" stroke-width="1.800"/><path d="M15 15L30 30M15 15V21M15 15H21M30 30V24M30 30H24" fill="none" stroke="#222" stroke-width="1.800"/></svg></div>
        </div>
        <div class="rg-bar"><span>Util</span><svg class="plus" viewBox="0 0 14 14"><path d="M7 1V13M1 7H13" stroke="#888" stroke-width="3"/></svg></div>
      </div>
    </div>

    <div class="gh-tools">
      <svg class="t29" viewBox="0 0 29 34"><path d="M2 33V3H15L18 8H27V14H2" fill="#e8e8e8" stroke="#aaa"/><path d="M1 33V15L10 13H28V33Z" fill="url(#fold)" stroke="#2c7a24"/></svg>
      <svg class="t33" viewBox="0 0 34 34"><path d="M2 4Q2 1 5 1H29Q32 1 32 4V30L29 33H5Q2 33 2 30Z" fill="#1b52d0" stroke="#0a2a80"/><rect x="7" y="2" width="20" height="13" fill="#d8d8d8"/><path d="M9 6H25M9 10H25" stroke="#999"/><rect x="9" y="20" width="17" height="13" fill="#ccc"/><rect x="13" y="23" width="6" height="9" fill="#1b52d0"/></svg>
      <i class="t-sep"></i>
      <div class="zoom-box"><span>176%</span><svg viewBox="0 0 12 8"><path d="M1 1L6 7 11 1" fill="none" stroke="#666"/></svg></div>
      <svg class="t34" viewBox="0 0 34 34"><path d="M3 11V3H13M21 3H31V11M31 23V31H21M13 31H3V23" fill="none" stroke="#111" stroke-width="4"/><path d="M13 13L21 21M21 13L13 21" stroke="#333" stroke-width="2.500"/></svg>
      <svg class="t-drop" viewBox="0 0 8 5"><path d="M0 0H8L4 5Z"/></svg>
      <svg class="t34 t-eye" viewBox="0 0 34 34"><path d="M1 17C8 6 26 6 33 17 26 28 8 28 1 17Z" fill="#f2f2f2" stroke="#333" stroke-width="2"/><circle cx="17" cy="17" r="9" fill="#5cb8e8" stroke="#114"/><circle cx="17" cy="17" r="4" fill="#0a1a30"/></svg>
      <svg class="t-drop" viewBox="0 0 8 5"><path d="M0 0H8L4 5Z"/></svg>
      <svg class="t32" viewBox="0 0 32 36"><path d="M29 1C28 12 22 24 13 29 12 20 20 8 29 1Z" fill="#e82020" stroke="#801010"/><path d="M13 29C10 27 14 22 16 21L19 24C18 27 15 30 13 29Z" fill="#ffb020"/><path d="M13 29C9 36 2 33 2 27 2 22 7 20 6 26" fill="none" stroke="#3a1010" stroke-width="2.500"/></svg>
      <div class="t-right">
        <svg class="t34" viewBox="0 0 34 38"><path d="M17 2C25 2 27 12 24 16L10 16C7 12 9 2 17 2Z" fill="#f0f0f0" stroke="#888"/><path d="M4 24C8 14 26 14 30 24 26 30 8 30 4 24Z" fill="#333"/><path d="M4 24C8 34 26 34 30 24" fill="none" stroke="#777" stroke-width="2"/></svg>
        <svg class="t34 m8" viewBox="0 0 34 38"><path d="M8 10L22 2 32 12 32 22 12 36 2 26Z" fill="#f4f4f4" stroke="#666" stroke-width="1.400"/><ellipse cx="22" cy="11" rx="6" ry="7" fill="none" stroke="#666"/><ellipse cx="22" cy="11" rx="3" ry="4" fill="none" stroke="#666"/><ellipse cx="9" cy="26" rx="5" ry="7" fill="none" stroke="#888"/><path d="M8 10L16 20 10 36" fill="none" stroke="#888"/></svg>
        <div class="t-sel m4"><svg class="t34" viewBox="0 0 34 38"><path d="M8 10L20 2C28 1 34 10 31 20L16 36C8 36 2 28 3 20Z" fill="#c81010" stroke="#700"/><ellipse cx="23" cy="12" rx="6" ry="8" fill="#800"/><path d="M6 14L14 25" stroke="#ff8080" stroke-width="2"/></svg></div>
        <i class="t-vline m9"></i>
        <svg class="t34 m10" viewBox="0 0 34 38"><path d="M1 3L8 3C18 1 26 8 28 16 30 22 29 28 26 31L30 36 22 33C16 28 12 26 10 20Z" fill="#22a8b0" stroke="#0a4048"/><path d="M6 2L14 18 24 36" stroke="#333" stroke-width="1.500" fill="none"/></svg>
        <svg class="t34 m6" viewBox="0 0 34 38"><path d="M8 14L22 2 33 14 25 24Z" fill="#60b010" stroke="#2a6000"/><ellipse cx="22" cy="12" rx="5" ry="6" fill="#2a7000"/><path d="M3 22L14 22 22 34 14 37 3 30Z" fill="#e8e8e8" stroke="#666"/><path d="M8 14L25 34" stroke="#222" stroke-width="1.600"/></svg>
        <svg class="t34 m6" viewBox="0 0 34 38"><circle cx="17" cy="19" r="16" fill="#e8e8e8" stroke="#888"/><path d="M17 3A16 16 0 0 0 17 35Z" fill="#f08a10" stroke="#804000"/><path d="M17 3V35" stroke="#702000" stroke-width="2"/></svg>
        <i class="t-vline m6"></i>
        <svg class="t34 m4" viewBox="0 0 34 38"><path d="M10 3H24L33 13V25L24 35H10L1 25V13Z" fill="#8cc4f4" stroke="#1a3a90" stroke-width="2"/><ellipse cx="13" cy="12" rx="6" ry="5" fill="#d8ecff"/></svg>
        <svg class="t-drop t-drop-r" viewBox="0 0 8 5"><path d="M0 0H8L4 5Z"/></svg>
      </div>
    </div>

    <div class="canvas">
      <svg class="wires" viewBox="58 446 1092 1032">
        <g class="w">
          <path d="M59 805C110 810 170 809 222 809"/>
          <path d="M59 1007C120 1005 180 1006 234 1006"/>
          <path d="M600 808C680 806 716 770 772 738S840 692 905 690"/>
          <path d="M600 808C680 808 730 834 880 835"/>
          <path d="M646 856C700 856 725 830 770 790S830 742 905 726"/>
          <path d="M682 913C760 908 790 872 880 870"/>
          <path d="M682 913C760 910 800 906 880 905"/>
          <path d="M611 1006C700 1008 790 1026 888 1026"/>
          <path d="M690 1061H890"/>
          <path d="M1007 887C1090 880 1150 850 1148 795 1146 750 1112 690 1110 607 1109 560 1112 500 1123 446"/>
          <path d="M1152 510C1130 530 1120 550 1125 566 1130 610 1140 660 1152 690"/>
          <path d="M1000 446C1040 470 1090 490 1152 506"/>
          <path d="M1016 1043C1080 1040 1120 1025 1152 986"/>
        </g>
        <path class="gw" d="M693 960C770 957 790 942 880 941" stroke="url(#gwire)"/>
        <g>
          <path d="M1074 1448A33 33 0 0 1 1136 1440" fill="none" stroke="#111" stroke-width="4.500"/>
          <rect x="1063" y="1413" width="9" height="10" fill="#111" transform="rotate(-20 1067 1417)"/>
          <circle cx="1104" cy="1432" r="29" fill="url(#nv)" stroke="#fff" stroke-width="3"/>
          <path d="M1094 1407L1100 1416 1106 1405ZM1128 1418L1120 1424 1130 1429ZM1124 1449L1116 1442 1117 1455ZM1084 1452L1090 1444 1078 1446Z" fill="#fff"/>
        </g>
      </svg>
      <i class="scroll-stub"></i>

      <div class="note note1">
        <i class="grip gi"></i><i class="grip go"></i>
        <div class="note-head">notes</div>
        <div class="note-body"><p>Let us create 2 nested spheres.</p></div>
      </div>

      <div class="node param p1"><i class="grip gi"></i><span>Pln Cell Phone Stand Sphere 1 Origin</span><i class="grip go"></i></div>
      <div class="node slider s1"><div class="sl-name">Sphere 1 Solid Radius</div><div class="sl-val"><div class="track"></div><i class="knob k1"></i><span class="val v1">40</span></div><i class="grip go"></i></div>
      <div class="node slider s2"><div class="sl-name">Sphere 1 Solid Radius</div><div class="sl-val"><div class="track"></div><i class="knob k2"></i><span class="val v2">40</span></div><i class="grip go"></i></div>
      <div class="node slider green s3"><div class="sl-name">Sphere 1 Solid Radius</div><div class="sl-val"><div class="track"></div><i class="knob k3"></i><span class="val v3">20</span></div><i class="grip go"></i></div>
      <div class="node param p2"><i class="grip gi"></i><span>Pln Cell Phone Stand Sphere 2 Origin</span><i class="grip go"></i></div>
      <div class="node slider s4"><div class="sl-name">Sphere 2 Void radius</div><div class="sl-val"><div class="track"></div><i class="knob k4"></i><span class="val v4">40</span></div><i class="grip go"></i></div>

      <div class="node comp sph1">
        <div class="c-in"><span>B<i class="grip gi"></i></span><span>R<i class="grip gi"></i></span></div>
        <div class="c-bar"><b>Sph</b></div>
        <div class="c-out"><span>S<i class="grip go"></i></span></div>
      </div>
      <div class="node comp box">
        <div class="c-in"><span>B<i class="grip gi"></i></span><span>X<i class="grip gi"></i></span><span>Y<i class="grip gi"></i></span><span>Z<i class="grip gi"></i></span></div>
        <div class="c-bar"><b>Box</b></div>
        <div class="c-out"><span>B<i class="grip go"></i></span></div>
      </div>
      <div class="node comp sph2">
        <div class="c-in"><span>B<i class="grip gi"></i></span><span>R<i class="grip gi"></i></span></div>
        <div class="c-bar"><b>Sph</b></div>
        <div class="c-out"><span>S<i class="grip go"></i></span></div>
      </div>
      <div class="node comp part">
        <div class="c-in"><span>B<i class="grip gi"></i></span><span>R<i class="grip gi"></i></span><span>L<i class="grip gi"></i></span></div>
        <div class="c-bar"></div>
      </div>

      <div class="note note2">
        <i class="grip gi"></i><i class="grip go"></i>
        <div class="note-head">notes</div>
        <div class="note-body"><p>In the future we may need to do<br>something if the spheres do not<br>touch the origin plane as this<br>means we are proposing they float<br>in the air above the plane.</p><i class="note-scroll"></i></div>
      </div>
    </div>

    <div class="gh-status"><span class="dots">...</span><span class="ver">1.0.0008</span></div>
  </section>
</div>
</body>
</html>
```

FILE: styles.css
```css
* { box-sizing: border-box; }
html, body { margin: 0; padding: 0; }
body { width: 2559px; height: 1539px; overflow: hidden; font-family: "Open Sans", "Noto Sans", sans-serif; font-size: 17.500px; color: #333; background: #dedede; }
.defs { position: absolute; width: 0; height: 0; }
svg { display: block; }

.rhino { position: relative; width: 2559px; height: 1539px; display: flex; flex-direction: column; background: #d8dade; overflow: hidden; }

/* Rhino title + menu */
.r-title { height: 32px; background: #e9ebef; display: flex; align-items: center; padding-left: 2px; flex: none; position: relative; }
.r-logo { width: 25px; height: 25px; margin-top: 10px; flex: none; }
.r-title-text { margin-left: 4px; font-size: 18px; color: #444; margin-top: 4px; white-space: nowrap; }
.win-btns { margin-left: auto; display: flex; align-items: center; padding-right: 28px; gap: 53px; }
.wb { width: 16px; height: 16px; }
.r-menu { height: 32px; background: #e9ebef; padding-left: 12px; line-height: 28px; font-size: 18px; color: #555; flex: none; }

/* Command area */
.r-cmd { height: 81px; flex: none; display: flex; background: #e9ebef; }
.handle { width: 20px; display: flex; flex-direction: column; align-items: center; gap: 5px; padding-top: 24px; }
.handle i { width: 4px; height: 4px; border-radius: 50%; background: #aab; display: block; }
.cmd-main { flex: 1; background: #fff; display: flex; flex-direction: column; }
.cmd-hist { height: 52px; overflow: hidden; display: flex; flex-direction: column; justify-content: flex-end; border-bottom: 1px solid #c9cede; line-height: 31px; font-size: 18px; color: #222; }
.cmd-prompt { flex: 1; font-weight: 700; font-size: 18px; color: #111; line-height: 26px; }
.cmd-side { width: 26px; background: #e9ebef; flex: none; }
.cmd-track { height: 52px; background: #efefef; width: 24px; }
.cmd-btn { width: 23px; height: 13px; border: 1px solid #aab; background: #e9ebef; margin: 0 0 0 1px; display: flex; align-items: center; justify-content: center; }
.cmd-btn:nth-child(2) { margin-top: 2px; }
.arrow { width: 10px; height: 6px; }

/* Rhino tabs */
.r-tabs { height: 32px; flex: none; background: #d6d8dc; display: grid; grid-template-columns: 1070px 82px 124px 128px 129px 144px 100px 720px 20px; align-items: center; color: #5b6068; font-size: 18.500px; position: relative; padding: 2px 0 0 35px; }
.r-tabs span { white-space: nowrap; }
.r-tabs span:nth-child(2) { transform: translateX(-61px); }
.gear { width: 18px; height: 18px; }
.r-gear { position: absolute; left: 2530px; top: 7px; }

.r-tools { height: 52px; flex: none; background: #e9ebef; display: flex; align-items: flex-start; padding: 3px 0 0 29px; margin-left: 3px; }
.doc { width: 21px; height: 30px; margin-top: 3px; margin-left: -3px; }
.rt-cell { width: 42px; height: 36px; position: relative; display: flex; justify-content: center; }
.rt-cell svg { width: 36px; height: 36px; }
.rt-first { margin-left: 1101px; }
.rt-second { margin-left: 6px; }
.tri { position: absolute; right: 0; bottom: -6px; width: 10px; height: 10px; background: #8a8e94; clip-path: polygon(100% 0, 100% 100%, 0 100%); }
.qm { font: 700 26px "Liberation Serif", serif; fill: #fff; text-anchor: middle; }
.qm-s { font-size: 19px; }
.qm-xs { font-size: 13px; }

/* Main region */
.r-main { flex: 1; min-height: 0; display: flex; }
.left { width: 57px; flex: none; display: flex; flex-direction: column; padding-top: 3px; }
.toolbox { margin-left: 3px; height: 632px; background: #e9ebef; border-radius: 6px 0 0 6px; }
.tb-strip { height: 16px; border-bottom: 2px solid #d8dade; }
.tb-grid { display: grid; grid-template-columns: 40px 40px; grid-auto-rows: 42px; padding: 4px 0 0 5px; width: 54px; overflow: hidden; }
.tool { width: 32px; height: 34px; position: relative; }
.tool svg { width: 32px; height: 34px; }
.tool .tri { right: -6px; bottom: -5px; }

.osnap { margin-left: 3px; flex: 1; background: #e9ebef; }
.os-head { height: 31px; padding-left: 8px; line-height: 27px; color: #667; font-size: 17.500px; border-bottom: 2px solid #d8dade; white-space: nowrap; overflow: hidden; }
.os-ic { padding: 3px 0 0 15px; height: 34px; }
.os-ic svg { width: 26px; height: 24px; }
.os-list { list-style: none; margin: 0; padding: 0 0 0 4px; overflow: hidden; }
.os-list li { height: 25.900px; display: flex; align-items: center; gap: 5px; white-space: nowrap; font-size: 18px; color: #444; }
.os-list li::before { content: ""; width: 22px; height: 20px; background: #fff; border: 2px solid #c7cddf; flex: none; }
.os-list .os-dis { margin-top: 27px; }

/* Viewports */
.vps { flex: none; width: 2200px; display: grid; grid-template-columns: 1158px 1030px; grid-template-rows: 610px 610px; column-gap: 6px; row-gap: 5px; padding-top: 6px; background: #d8dade; align-content: start; }
.vp { position: relative; background: #9aa2aa; overflow: hidden; box-shadow: 0 0 0 2px #c9cede; display: flex; flex-direction: column; }
.vp-svg { position: absolute; left: 0; top: 0; width: 100%; height: 100%; }
.vp-gridded {
  background-color: #9aa2aa;
  background-image:
    linear-gradient(#80868e 1px, transparent 1px), linear-gradient(90deg, #80868e 1px, transparent 1px),
    linear-gradient(#8f969e 1px, transparent 1px), linear-gradient(90deg, #8f969e 1px, transparent 1px);
  background-size: 100px 100px, 100px 100px, 20px 20px, 20px 20px;
  background-position: 0 9px, 36px 0, 0 9px, 0 0;
}
.vp-green { background: #6dff6d; flex: none; }
.g-left { height: 306px; border-bottom: 2px solid #9c1c1c; }
.g-right { height: 287px; }
.vp-rest { flex: 1; }
.vp-rest-right {
  background-size: 121.600px 122px, 121.600px 122px, 24.320px 24.400px, 24.320px 24.400px;
  background-position: 0 -1px, 41px 0, 0 -1px, 41px 0;
}
.vp-tab { position: absolute; left: 0; top: 0; display: flex; align-items: center; font-weight: 700; font-size: 18px; }
.vp-tab-blue { width: 141px; height: 26px; background: #6a9cfb; color: #252c3c; padding-left: 9px; border-radius: 0 0 3px 0; }
.vp-drop { margin-left: 12px; width: 17px; height: 26px; border-left: 1px solid #223; display: flex; align-items: center; justify-content: center; }
.arrow2 { width: 10px; height: 6px; }
.vp-tab-gray { width: 86px; height: 28px; background: #a7acb2; color: #3a3f48; padding-left: 9px; font-size: 19px; }
.vp-drop2 { margin-left: 10px; width: 15px; height: 22px; background: #b9bdc3; border: 1px solid #888; display: flex; align-items: center; justify-content: center; }
.ax { font-size: 19px; fill: #5a6068; }
.assembly { font-family: "Open Sans", sans-serif; font-size: 35px; fill: #111; }

/* Layers */
.layers { width: 302px; flex: none; display: flex; flex-direction: column; padding-top: 3px; }
.ly-head { height: 28px; background: #e9ebef; border-radius: 6px 6px 0 0; display: flex; align-items: center; justify-content: space-between; padding: 0 7px 2px 7px; color: #667; font-size: 17.500px; margin-right: 2px; }
.ly-body { flex: 1; display: flex; margin-top: 2px; min-height: 0; }
.ly-left { width: 266px; flex: none; background: #e9ebef; display: flex; flex-direction: column; }
.ly-tools { display: grid; grid-template-columns: repeat(8, 33px); grid-auto-rows: 33px; padding: 13px 0 0 5px; height: 81px; }
.ly-tools svg { width: 24px; height: 24px; }
.ly-search { height: 33px; margin: 1px 3px 0 1px; background: #fff; border: 2px solid #c3cade; border-radius: 17px; display: flex; align-items: center; padding-left: 6px; gap: 5px; color: #778; font-size: 17.500px; }
.ly-search svg { width: 18px; height: 18px; }
.ly-table { flex: 1; margin-top: 10px; background: #fff; position: relative; min-height: 0; }
.ly-th { height: 33px; display: flex; border-bottom: 2px solid #e3e6eb; align-items: center; overflow: hidden; }
.th-name { width: 119px; padding-left: 8px; color: #334; font-size: 17.500px; flex: none; }
.ly-th i { width: 30px; height: 100%; border-left: 1px solid #e3e6eb; flex: none; }
.th-m { border-left: 1px solid #e3e6eb; height: 100%; padding-left: 9px; line-height: 33px; color: #334; font-size: 17.500px; }
.ly-row { height: 31px; border-bottom: 1px dotted #c8ccd6; display: flex; align-items: center; position: relative; }
.row-name { margin-left: 26px; font-weight: 700; width: 97px; color: #222; font-size: 17.500px; }
.row-check { width: 22px; height: 16px; margin-left: 2px; }
.row-col { width: 21px; height: 21px; background: #000; margin-left: 68px; flex: none; }
.row-mat { width: 19px; height: 19px; border: 2px solid #888; border-radius: 50%; margin-left: 7px; flex: none; }
.ly-thumb { position: absolute; left: 11px; bottom: 6px; width: 69px; height: 12px; background: #c2c2c2; border-radius: 6px; }
.ly-side { flex: 1; background: linear-gradient(#e9ebef 54px, #d8dade 54px); display: flex; flex-direction: column; align-items: center; padding-top: 13px; gap: 30px; }
.ly-side svg { width: 24px; height: 24px; flex: none; }
.ly-side-first { margin-top: 2px; }

/* Rhino status */
.r-status { height: 34px; flex: none; background: #e9ebef; display: grid; grid-template-columns: 63px 175px 325px 130px 33px 263px 116px 78px 71px 84px 149px 177px 29px 217px 146px 92px 380px 31px; align-items: center; font-size: 18.600px; color: #555; white-space: nowrap; }
.panel-ic { width: 22px; height: 22px; }
.r-status > .panel-ic:first-child { margin-left: 10px; }
.st-swatch { width: 23px; height: 14px; background: #000; margin-top: 15px; }
.pill { background: #ccd6ea; border-radius: 3px; height: 28px; display: flex; align-items: center; justify-content: center; color: #222; justify-self: start; font-weight: 700; font-size: 17.500px; }
.p-osnap { width: 79px; }
.p-smart { width: 127px; }
.p-filter { width: 69px; }
.lock { width: 14px; height: 24px; }
.r-bottom { height: 12px; flex: none; border-top: 3px solid #bcbec2; background: #dedede; }

/* Grasshopper window */
.gh { position: absolute; left: 57px; top: 18px; width: 1094px; height: 1492px; display: flex; flex-direction: column; background: #f0f0f0; border: 1px solid #a8a8a8; border-top-width: 2px; border-radius: 10px; overflow: hidden; box-shadow: 0 1px 4px rgba(0,0,0,.2); z-index: 2; }
.gh-title { height: 42px; flex: none; background: #f3f3f3; display: flex; align-items: center; padding: 0 0 2px 11px; color: #8a8a8a; font-size: 17px; white-space: nowrap; }
.gh-btns { margin-left: auto; display: flex; align-items: center; gap: 53px; padding-right: 25px; }
.gh-menu { height: 44px; flex: none; background: #f9f9f9; display: grid; grid-template-columns: 56px 59px 67px 90px 98px 60px 1fr; align-items: center; padding: 0 14px 2px 19px; color: #111; font-size: 17.500px; }
.gh-doc { justify-self: end; font-size: 18.600px; }
.gh-tabs { height: 33px; flex: none; background: #f0f0f0; display: grid; grid-template-columns: 90px 79px 61px 83px 64px 103px 72px 48px 63px 52px 47px 56px 109px 1fr; grid-template-rows: 31px; align-items: center; padding: 0 0 0 12px; color: #7b7b7b; font-size: 18px; position: relative; z-index: 1; }
.gh-tabs .active { align-self: start; width: 90px; height: 35px; padding-left: 13px; line-height: 29px; color: #111; background: linear-gradient(#fff, #f4f4f4 70%, #d9d9d9); border: 1px solid #aaa; border-bottom: 0; border-radius: 9px 9px 0 0; }

.ribbon { height: 259px; flex: none; background: linear-gradient(#d3d3d3, #f0f0f0); border-top: 1px solid #a8a8a8; border-radius: 8px 8px 0 0; display: flex; align-items: flex-start; gap: 5px; padding: 4px 0 0 3px; }
.rg { height: 107px; border: 1px solid #9a9a9a; border-radius: 8px; overflow: hidden; display: flex; flex-direction: column; background: linear-gradient(#e0e0e0, #d8d8d8); flex: none; }
.rg5 { width: 277px; }
.rg3 { width: 162px; }
.rg2 { width: 106px; }
.rg-icons { display: grid; grid-template-rows: 43px 43px; margin-left: -5px; height: 86px; flex: none; }
.rg5 .rg-icons { grid-template-columns: repeat(5, 57px); }
.rg3 .rg-icons { grid-template-columns: repeat(3, 57px); }
.rg2 .rg-icons { grid-template-columns: repeat(2, 57px); }
.ic { display: flex; align-items: center; justify-content: center; border-right: 1px solid #cfcfcf; box-shadow: 1px 0 0 #ececec; }
.ic svg { width: 42px; height: 40px; filter: drop-shadow(1px 2px 1px rgba(0,0,0,.22)); }
.rg5 .ic:nth-child(5n), .rg3 .ic:nth-child(3n), .rg2 .ic:nth-child(2n) { border-right: 0; box-shadow: none; }
.mm { font: italic 700 33px "Liberation Serif", serif; color: #111; position: relative; }
.mm sup { font-size: 17px; line-height: 0; vertical-align: 15px; }
.rg-bar { flex: 1; background: linear-gradient(#2e2e2e, #111); color: #fff; font-size: 15px; display: flex; align-items: center; justify-content: center; position: relative; line-height: 1; padding-right: 18px; }
.plus { position: absolute; right: 4px; top: 5px; width: 12px; height: 12px; }

.gh-tools { height: 48px; flex: none; background: linear-gradient(#ffffff, #f2f2f2); border-top: 2px solid #8a8a8a; display: flex; align-items: center; padding-left: 6px; position: relative; }
.t29 { width: 29px; height: 34px; }
.t33 { width: 33px; height: 33px; margin-left: 11px; }
.t34 { width: 34px; height: 36px; flex: none; }
.t32 { width: 32px; height: 36px; margin-left: 8px; }
.t-sep { width: 1px; height: 34px; background: #c4c4c4; margin: 0 5px 0 9px; flex: none; }
.t-vline { width: 1px; height: 34px; background: #c4c4c4; flex: none; }
.zoom-box { width: 246px; height: 33px; background: #fff; border: 1px solid #8f8f8f; border-radius: 2px; display: flex; align-items: center; justify-content: space-between; padding: 0 8px 0 3px; font-size: 18px; color: #222; margin-right: 6px; }
.zoom-box svg { width: 12px; height: 8px; }
.t-drop { width: 8px; height: 5px; margin-left: 9px; flex: none; }
.t-eye { margin-left: 8px; }
.t-right { margin-left: auto; display: flex; align-items: center; padding-right: 6px; }
.m4 { margin-left: 4px; }
.m6 { margin-left: 6px; }
.m8 { margin-left: 8px; }
.m9 { margin-left: 9px; }
.m10 { margin-left: 10px; }
.t-sel { width: 40px; height: 42px; border: 1px solid #0078d7; display: flex; align-items: center; justify-content: center; flex: none; }
.t-drop-r { margin-left: 4px; }

/* Canvas */
.canvas { height: 1032px; flex: none; position: relative; overflow: hidden; isolation: isolate;
  background-color: #d4d0c8;
  background-image:
    linear-gradient(rgba(0,0,0,.05) 2px, transparent 2px),
    linear-gradient(90deg, rgba(0,0,0,.05) 2px, transparent 2px),
    linear-gradient(rgba(0,0,0,.1) 1px, transparent 1px),
    linear-gradient(90deg, rgba(0,0,0,.1) 1px, transparent 1px);
  background-size: 100% 353.200px, 1059.600px 100%, 100% 88.300px, 264.900px 100%;
  background-position: 0 27px, 15px 0, 0 27px, 15px 0;
}
.wires { position: absolute; left: 0; top: 0; width: 1092px; height: 1032px; z-index: -2; }
.w path { fill: none; stroke: #5a5952; stroke-width: 4.500px; opacity: .93; }
.gw { fill: none; stroke-width: 4.500px; }
.scroll-stub { position: absolute; left: 0; bottom: 0; width: 11px; height: 42px; background: linear-gradient(#d4d4d4, #888 40%, #777); border: 1px solid #111; border-left: 0; }

.node { position: absolute; }
.grip { position: absolute; width: 15px; height: 15px; background: #fff; border: 4px solid #000; border-radius: 50%; z-index: -1; top: 50%; margin-top: -7px; display: block; }
.gi { left: -9px; }
.go { right: -9px; }

.param { height: 36px; width: 367px; border: 2px solid #333; border-radius: 6px; background: linear-gradient(#c8c8d0, #b6b6c0 14%, #a8a8b5 18%, #a3a3b0 60%, #8d8d9a); display: flex; align-items: center; padding: 0 0 3px 10px; font-size: 20px; color: #111; white-space: nowrap; }
.p1 { left: 170px; top: 345px; }
.p2 { left: 181px; top: 542px; }

.slider { height: 36px; border: 2px solid #333; border-radius: 6px; display: flex; font-size: 20px; color: #111; }
.sl-name { flex: none; padding-left: 9px; line-height: 29px; white-space: nowrap; background: linear-gradient(#c8c8d0, #b6b6c0 14%, #a8a8b5 18%, #a3a3b0 60%, #8d8d9a); border-right: 2px solid #333; border-radius: 4px 0 0 4px; }
.sl-val { flex: 1; position: relative; background: linear-gradient(#f2f2f2, #e8e8e8 18%, #d6d6d6 55%, #c4c4c4); border-radius: 0 4px 4px 0; }
.track { position: absolute; left: 17px; right: 17px; top: 7px; height: 10px; border: 1px solid #b8b8b8; border-top: 0; background: repeating-linear-gradient(90deg, #b8b8b8 0 1px, transparent 1px 18px) 0 5px / 100% 5px no-repeat; }
.knob { position: absolute; top: 9px; width: 14px; height: 14px; background: #fff; border: 4px solid #000; border-radius: 50%; }
.val { position: absolute; top: 0; line-height: 29px; }
.s1 { left: 147px; top: 392px; width: 437px; }
.s1 .sl-name { width: 224px; }
.k1 { left: 80px; } .v1 { left: 100px; }
.s2 { left: 154px; top: 449px; width: 463px; }
.s2 .sl-name { width: 225px; }
.k2 { left: 90px; } .v2 { left: 110px; }
.s3 { left: 165px; top: 497px; width: 463px; }
.s3 .sl-name { width: 224px; }
.k3 { left: 50px; } .v3 { left: 70px; }
.s4 { left: 200px; top: 598px; width: 428px; }
.s4 .sl-name { width: 215px; }
.k4 { left: 80px; } .v4 { left: 100px; }

.green { border-color: #0d3a00; color: #0c1a00; }
.green .sl-name { background: linear-gradient(#9fe060, #6fc81f 14%, #60bb10 20%, #4fae08); border-right-color: #0d3a00; }
.green .sl-val { background: linear-gradient(#d8f6b0, #a4ea58 18%, #8fe038 60%, #82d82a); }
.green .track { border-color: #6caf28; background-image: repeating-linear-gradient(90deg, #6caf28 0 1px, transparent 1px 18px); }

.comp { border: 2px solid #333; border-radius: 6px; background: linear-gradient(#c8c8d0, #b6b6c0 10%, #a8a8b5 14%, #a3a3b0 60%, #8d8d9a); display: flex; color: #111; font-size: 19px; }
.c-in { width: 32px; flex: none; display: flex; flex-direction: column; justify-content: center; }
.box .c-in { width: 31px; }
.c-in span, .c-out span { height: 35px; display: flex; align-items: center; justify-content: center; position: relative; }
.c-in span { padding-left: 2px; margin-top: -1px; margin-bottom: 1px; }
.c-out span { padding-right: 6px; }
.c-bar { width: 43px; margin: 2px 0; flex: none; background: linear-gradient(#7a7a7a, #555 12%, #4a4a4a 20%, #333); border: 2px solid #0f0f0f; border-radius: 7px; display: flex; align-items: center; justify-content: center; }
.c-bar b { writing-mode: vertical-rl; transform: rotate(180deg); color: #fff; font-size: 23px; line-height: 1; }
.c-out { flex: 1; display: flex; flex-direction: column; justify-content: center; }
.sph1 { left: 851px; top: 223px; width: 114px; height: 78px; }
.box { left: 825px; top: 368px; width: 115px; height: 149px; }
.sph2 { left: 837px; top: 559px; width: 113px; height: 78px; }
.part { left: 1055px; top: 649px; width: 60px; height: 113px; }

.note { position: absolute; background: #88fff5; border: 2px solid #222; border-radius: 6px; display: flex; flex-direction: column; }
.note1 { left: 192px; top: 119px; width: 623px; height: 175px; }
.note2 { left: 194px; top: 745px; width: 622px; height: 176px; }
.note-head { height: 29px; flex: none; background: linear-gradient(#cfeeea 0 2px, #6ccbc4 3px); border-bottom: 2px solid #111; border-radius: 4px 4px 0 0; text-align: center; font-size: 19.500px; line-height: 24px; color: #111; }
.note-body { flex: 1; min-height: 0; background: linear-gradient(#5fbeb7, #88fff5 12px); border-radius: 0 0 4px 4px; position: relative; overflow: hidden; display: flex; }
.note-body p { margin: 0; font: 700 29px "Liberation Mono", monospace; color: #000; white-space: nowrap; }
.note1 .note-body { align-items: center; padding: 0 0 2px 31px; }
.note2 .note-body p { width: 100%; text-align: center; line-height: 32px; padding-right: 19px; margin-top: -1px; }
.note-scroll { position: absolute; right: 0; top: 1px; width: 10px; height: 124px; background: #4f9f98; border-radius: 5px; }

.gh-status { flex: 1; background: #f0f0f0; border-top: 2px solid #fff; display: flex; align-items: center; justify-content: space-between; padding: 0 57px 0 10px; color: #888; font-size: 17.500px; }
.dots { color: #333; }
```
